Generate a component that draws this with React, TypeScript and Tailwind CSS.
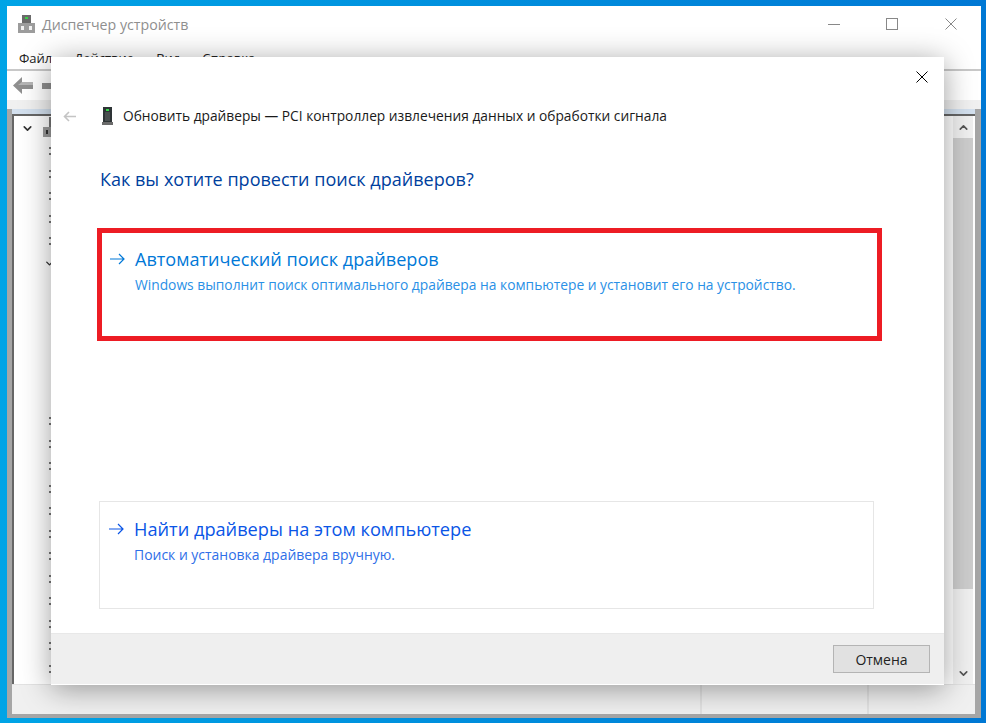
import { ChevronUp, ChevronDown } from "lucide-react";

const FONT = "font-['Open_Sans','Noto_Sans',sans-serif]";

function DeviceIcon() {
  return (
    <svg width="17" height="18" viewBox="0 0 17 18" className="shrink-0">
      <rect x="4" y="0" width="9" height="9" fill="#6a6a6a" />
      <rect x="7" y="2" width="3" height="2" fill="#3ecf4a" />
      <rect x="0" y="8" width="17" height="10" fill="#9c9c9c" />
      <rect x="3" y="11" width="3" height="4" fill="#f2f2f2" />
      <rect x="11" y="11" width="3" height="4" fill="#f2f2f2" />
    </svg>
  );
}

function TowerIcon() {
  return (
    <svg width="11" height="18" viewBox="0 0 11 18" className="shrink-0">
      <rect x="1" y="0" width="9" height="15" fill="#2e3436" />
      <rect x="3" y="5" width="5" height="9" fill="#4a4f50" />
      <rect x="4" y="2" width="3" height="2" fill="#37d64a" />
      <rect x="0" y="15" width="11" height="3" fill="#6b6b6b" />
    </svg>
  );
}

function CrossIcon({ color }: { color: string }) {
  return (
    <svg width="12" height="12" viewBox="0 0 12 12" className="shrink-0" stroke={color} strokeWidth="1">
      <path d="M0.5 0.5L11.5 11.5M11.5 0.5L0.5 11.5" fill="none" />
    </svg>
  );
}

function TreeRow({ kind }: { kind: "dots" | "open" | "none" }) {
  return (
    <div className="h-[22.5px] flex items-center justify-end shrink-0">
      {kind === "dots" && (
        <div className="flex flex-col gap-[4px]">
          <div className="w-[2px] h-[2px] bg-[#777]" />
          <div className="w-[2px] h-[2px] bg-[#777]" />
        </div>
      )}
      {kind === "open" && (
        <ChevronDown size={11} strokeWidth={3} className="text-[#333] -mr-1" />
      )}
    </div>
  );
}

const rows: ("dots" | "open" | "none")[] = [
  "dots", "dots", "dots", "dots", "dots", "open",
  "none", "none", "none", "none", "none", "none",
  ...Array(12).fill("dots"),
];

interface DriverOptionProps {
  title: string;
  text: string;
  boxed: string;
  arrow: string;
  titleClass: string;
  textClass: string;
}

function DriverOption({ title, text, boxed, arrow, titleClass, textClass }: DriverOptionProps) {
  return (
    <div className={boxed}>
      <div className="flex items-center gap-[10px] pl-[8px]">
        <svg width="15" height="12" viewBox="0 0 15 12" className="shrink-0" fill="none" stroke={arrow} strokeWidth="1.2">
          <path d="M0 6H14M9 1L14 6L9 11" />
        </svg>
        <span className={`leading-[26px] ${titleClass}`}>{title}</span>
      </div>
      <p className={`mt-[3px] leading-[20px] pl-[33px] ${textClass}`}>{text}</p>
    </div>
  );
}

export default function App() {
  return (
    <div className={`relative w-[986px] h-[723px] overflow-hidden bg-gradient-to-r from-[#00a4e6] to-[#0078d4] pt-[6px] pl-[7px] ${FONT}`}>
      {/* main window behind the dialog */}
      <div className="w-[974px] h-[712px] bg-white flex flex-col">
        <div className="h-[36px] flex items-center pl-[11px] shrink-0">
          <DeviceIcon />
          <span className="ml-[7px] mt-[2px] text-[14.2px] text-[#8f8f8f]">Диспетчер устройств</span>
          <div className="ml-auto flex items-center pr-[24px]">
            <div className="w-[12px] h-[1px] bg-[#888] mr-[46px]" />
            <div className="w-[12px] h-[12px] border border-[#888] mr-[47px]" />
            <CrossIcon color="#888" />
          </div>
        </div>
        <div className="h-[29px] flex items-center gap-[22px] pl-[12px] pt-[7px] text-[13px] text-[#222] border-b-2 border-[#c8c8c8] shrink-0">
          <span>Файл</span>
          <span>Действие</span>
          <span>Вид</span>
          <span>Справка</span>
        </div>
        <div className="h-[29px] flex items-center gap-[9px] pl-[6px] shrink-0">
          <svg width="20" height="17" viewBox="0 0 20 17">
            <path d="M9 0L0 8.5L9 17V12H20V5H9Z" fill="#8f8f8f" />
            <path d="M9 5H20V8H5Z" fill="#b5b5b5" />
          </svg>
          <div className="w-[10px] h-[6px] bg-[#8f8f8f]" />
        </div>
        <div className="flex-1 min-h-0 flex flex-col bg-[#a6a6a6] pl-[5px] pr-[6px] pb-[4px]">
          <div className="h-[9px] -ml-[5px] -mr-[6px] bg-[#f0f0f0] shrink-0" />
          <div className="h-[5px] bg-[#d3e0ee] shrink-0" />
          <div className="flex-1 min-h-0 flex bg-white border-l-2 border-t-2 border-[#666]">
            <div className="flex-1 min-w-0 overflow-hidden pl-[7px]">
              <div className="h-[24px] flex items-center">
                <ChevronDown size={13} strokeWidth={3} className="text-[#333]" />
              </div>
            </div>
            <div className="w-[20px] mr-[2px] flex flex-col bg-[#f0f0f0] items-center shrink-0">
              <div className="h-[22px] flex items-center shrink-0">
                <ChevronUp size={13} strokeWidth={3} className="text-[#555]" />
              </div>
              <div className="w-full h-[451px] bg-[#cdcdcd] shrink-0" />
              <div className="flex-1" />
              <div className="h-[22px] flex items-center shrink-0">
                <ChevronDown size={13} strokeWidth={3} className="text-[#555]" />
              </div>
            </div>
          </div>
          <div className="h-[30px] bg-[#f0f0f0] flex justify-end border-t border-[#e2e2e2] shrink-0">
            <div className="w-[167px] border-l-2 border-[#e2e2e2]" />
            <div className="w-[108px] border-l-2 border-[#e2e2e2]" />
          </div>
        </div>
      </div>

      {/* tree stubs peeking out beside the dialog */}
      <div className="absolute left-[36px] top-[117px] w-[15px] flex flex-col">
        <div className="h-[23px] flex items-start justify-end">
          <svg width="8" height="20" viewBox="0 0 8 20">
            <rect x="6" y="0" width="2" height="10" fill="#777" />
            <rect x="0" y="10" width="8" height="10" fill="#9a9a9a" />
            <rect x="3" y="13" width="2" height="4" fill="#333" />
          </svg>
        </div>
        {rows.map((kind, i) => (
          <TreeRow key={i} kind={kind} />
        ))}
      </div>

      {/* update drivers dialog */}
      <div className="absolute left-[51px] top-[57px] w-[893px] h-[628px] bg-white flex flex-col shadow-[0_4px_28px_rgba(0,0,0,0.38)] border-b border-white">
        <div className="flex justify-end pt-[14px] pr-[16px] h-[36px] shrink-0">
          <CrossIcon color="#000" />
        </div>
        <div className="flex items-center h-[24px] mt-[11px] pl-[12px] shrink-0">
          <svg width="13" height="11" viewBox="0 0 13 11" fill="none" stroke="#c4c4c4" strokeWidth="1.6">
            <path d="M13 5.5H1.5M6 1L1.5 5.5L6 10" />
          </svg>
          <div className="ml-[26px]"><TowerIcon /></div>
          <span className="ml-[10px] text-[13.76px] text-[#1a1a1a] whitespace-nowrap">
            Обновить драйверы — PCI контроллер извлечения данных и обработки сигнала
          </span>
        </div>
        <h1 className="mt-[37px] ml-[49px] text-[18.05px] leading-[28px] text-[#003f9e] font-normal shrink-0">
          Как вы хотите провести поиск драйверов?
        </h1>
        <DriverOption
          boxed="mt-[35px] ml-[46px] mr-[62px] h-[113px] border-[5px] border-[#ed1c24] pt-[13px] shrink-0"
          arrow="#0078d7"
          titleClass="text-[18.1px] text-[#0078d7]"
          textClass="text-[13.8px] text-[#2a90e6]"
          title="Автоматический поиск драйверов"
          text="Windows выполнит поиск оптимального драйвера на компьютере и установит его на устройство."
        />
        <div className="h-[160px] shrink-0" />
        <DriverOption
          boxed="ml-[48px] mr-[70px] h-[108px] border border-[#e6e6e6] pt-[14px] pl-[1px] shrink-0"
          arrow="#0a55e6"
          titleClass="text-[18.2px] text-[#0a55e6]"
          textClass="text-[13.95px] text-[#2f6fe8]"
          title="Найти драйверы на этом компьютере"
          text="Поиск и установка драйвера вручную."
        />
        <div className="mt-auto h-[51px] bg-[#efefef] border-t border-[#e8e8e8] flex items-start justify-end pt-[11px] pr-[14px] shrink-0">
          <button className="w-[97px] h-[28px] bg-[#e1e1e1] border border-[#b4b4b4] text-[14px] text-[#222]">
            Отмена
          </button>
        </div>
      </div>
    </div>
  );
}
